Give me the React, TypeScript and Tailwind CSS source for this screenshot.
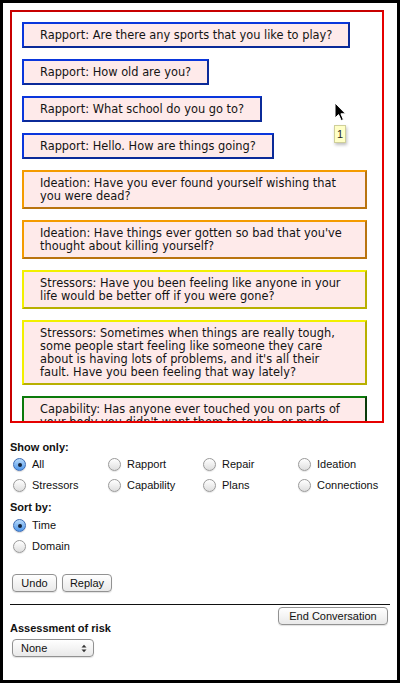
import React from "react";

type Domain = "rapport" | "ideation" | "stressors" | "capability";

const cardStyles: Record<Domain, string> = {
  rapport:
    "border-t-[#0a36dc] border-l-[#0a36dc] border-b-[#0b2a98] border-r-[#0b2a98]",
  ideation:
    "border-t-[#f49b00] border-l-[#f49b00] border-b-[#b97410] border-r-[#b97410]",
  stressors:
    "border-t-[#f2f000] border-l-[#f2f000] border-b-[#b8b000] border-r-[#b8b000]",
  capability:
    "border-t-[#0b7a0b] border-l-[#0b7a0b] border-b-[#0a3a0a] border-r-[#0a3a0a]",
};

const cards: { d: Domain; t: string }[] = [
  { d: "rapport", t: "Rapport: Are there any sports that you like to play?" },
  { d: "rapport", t: "Rapport: How old are you?" },
  { d: "rapport", t: "Rapport: What school do you go to?" },
  { d: "rapport", t: "Rapport: Hello. How are things going?" },
  { d: "ideation", t: "Ideation: Have you ever found yourself wishing that you were dead?" },
  { d: "ideation", t: "Ideation: Have things ever gotten so bad that you've thought about killing yourself?" },
  { d: "stressors", t: "Stressors: Have you been feeling like anyone in your life would be better off if you were gone?" },
  {
    d: "stressors",
    t: "Stressors: Sometimes when things are really tough, some people start feeling like someone they care about is having lots of problems, and it's all their fault. Have you been feeling that way lately?",
  },
  {
    d: "capability",
    t: "Capability: Has anyone ever touched you on parts of your body you didn't want them to touch, or made you do things you didn't want to do?",
  },
];

function Radio({ checked }: { checked?: boolean }) {
  if (checked) {
    return (
      <span className="ml-[3px] flex h-[13px] w-[13px] shrink-0 items-center justify-center rounded-full border border-[#3d6cb4] bg-[linear-gradient(#b7dafb,#4f97ea)] shadow-[0_1px_1px_rgba(0,0,0,0.15)]">
        <span className="h-[4px] w-[4px] rounded-full bg-[#14233a]" />
      </span>
    );
  }
  return (
    <span className="ml-[3px] h-[13px] w-[13px] shrink-0 rounded-full border border-[#9a9a9a] bg-[linear-gradient(#ffffff,#dedede)] shadow-[0_1px_1px_rgba(0,0,0,0.1)]" />
  );
}

function RadioItem({ label, checked }: { label: string; checked?: boolean }) {
  return (
    <div className="flex h-[21px] items-center">
      <Radio checked={checked} />
      <span className="ml-[6px] text-[11px] text-[#111]">{label}</span>
    </div>
  );
}

const btn =
  "h-[18px] rounded-[4px] border border-[#929292] bg-[linear-gradient(#ffffff,#e9e9e9)] text-[11px] leading-[16px] text-[#111] shadow-[0_1px_1px_rgba(0,0,0,0.12)]";

export default function App() {
  return (
    <div
      className="relative h-[683px] w-[400px] overflow-hidden border-[3px] border-black bg-white"
      style={{ fontFamily: '"Liberation Sans", Arial, sans-serif' }}
    >
      {/* Question panel */}
      <div className="ml-[7px] mt-[7px] h-[413px] w-[374px] overflow-hidden border-2 border-t-[#c80000] border-l-[#c80000] border-b-[#e60000] border-r-[#e60000]">
        <div
          className="flex flex-col items-start gap-[11px] pl-[10px] pr-[15px] pt-[10px]"
          style={{ fontFamily: '"DejaVu Sans", Verdana, sans-serif' }}
        >
          {cards.map((c, i) => (
            <div
              key={i}
              className={`border-2 bg-[#feeaea] px-4 py-[4.5px] text-[11.4px] leading-[13px] text-[#141414] ${cardStyles[c.d]}`}
            >
              {c.t}
            </div>
          ))}
        </div>
      </div>

      {/* Tooltip */}
      <div className="absolute left-[331px] top-[122px] flex h-[18px] w-[12px] items-center justify-center border border-[#cfcf9a] bg-[#ffffc6] text-[11px] text-[#222] shadow-[1px_2px_3px_rgba(0,0,0,0.25)]">
        1
      </div>

      {/* Mouse cursor */}
      <svg
        className="absolute left-[331px] top-[99px]"
        width="14"
        height="22"
        viewBox="0 0 14 22"
      >
        <path
          d="M1 1 L1 16 L4.6 12.6 L7.2 18.6 L9.4 17.6 L6.9 11.8 L11.6 11.8 Z"
          fill="#000"
          stroke="#fff"
          strokeWidth="1"
          strokeLinejoin="round"
        />
      </svg>

      {/* Controls */}
      <div className="px-[7px]">
        <div className="mt-[17px] h-[14px] text-[11px] font-bold leading-[14px] text-[#111]">
          Show only:
        </div>
        <div className="grid grid-cols-4">
          <RadioItem label="All" checked />
          <RadioItem label="Rapport" />
          <RadioItem label="Repair" />
          <RadioItem label="Ideation" />
          <RadioItem label="Stressors" />
          <RadioItem label="Capability" />
          <RadioItem label="Plans" />
          <RadioItem label="Connections" />
        </div>
        <div className="mt-[4px] h-[14px] text-[11px] font-bold leading-[14px] text-[#111]">
          Sort by:
        </div>
        <div className="mt-[1px]">
          <RadioItem label="Time" checked />
          <RadioItem label="Domain" />
        </div>

        <div className="mt-[17px] flex gap-[5px] pl-[2px]">
          <button className={`${btn} w-[45px]`}>Undo</button>
          <button className={`${btn} w-[50px]`}>Replay</button>
        </div>

        <div className="mt-[12px] h-px bg-[#111]" />

        <div className="mt-[2px] flex justify-end pr-[2px]">
          <button className={`${btn} w-[110px]`}>End Conversation</button>
        </div>

        <div className="mt-[-3px] h-[12px] text-[11px] font-bold leading-[12px] text-[#111]">
          Assessment of risk
        </div>

        <div className="ml-[2px] mt-[5px] flex h-[18px] w-[82px] items-center justify-between rounded-[4px] border border-[#929292] bg-[linear-gradient(#ffffff,#e9e9e9)] pl-[8px] pr-[6px] text-[11px] text-[#111] shadow-[0_1px_1px_rgba(0,0,0,0.12)]">
          <span>None</span>
          <svg width="6" height="9" viewBox="0 0 6 9">
            <path d="M0.5 3.5 L3 0.8 L5.5 3.5 Z" fill="#333" />
            <path d="M0.5 5.5 L3 8.2 L5.5 5.5 Z" fill="#333" />
          </svg>
        </div>
      </div>
    </div>
  );
}
